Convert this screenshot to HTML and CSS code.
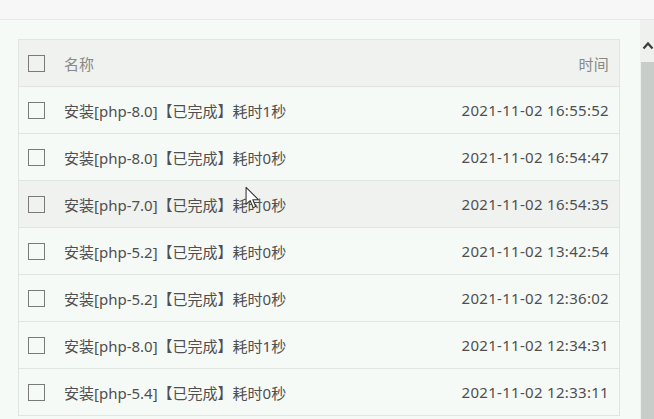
FILE: index.html
```html
<!DOCTYPE html>
<html lang="zh-CN">
<head>
<meta charset="utf-8">
<title>任务列表</title>
<link rel="stylesheet" href="styles.css">
</head>
<body>
<div class="topbar"></div>
<div class="main">
  <div class="content">
    <div class="table">
      <div class="row head">
        <span class="cb"></span>
        <span class="name">名称</span>
        <span class="time">时间</span>
      </div>
      <div class="row"><span class="cb"></span><span class="name">安装[php-8.0]【已完成】耗时1秒</span><span class="time">2021-11-02 16:55:52</span></div>
      <div class="row"><span class="cb"></span><span class="name">安装[php-8.0]【已完成】耗时0秒</span><span class="time">2021-11-02 16:54:47</span></div>
      <div class="row hover"><span class="cb"></span><span class="name">安装[php-7.0]【已完成】耗时0秒</span><span class="time">2021-11-02 16:54:35</span></div>
      <div class="row"><span class="cb"></span><span class="name">安装[php-5.2]【已完成】耗时0秒</span><span class="time">2021-11-02 13:42:54</span></div>
      <div class="row"><span class="cb"></span><span class="name">安装[php-5.2]【已完成】耗时0秒</span><span class="time">2021-11-02 12:36:02</span></div>
      <div class="row"><span class="cb"></span><span class="name">安装[php-8.0]【已完成】耗时1秒</span><span class="time">2021-11-02 12:34:31</span></div>
      <div class="row"><span class="cb"></span><span class="name">安装[php-5.4]【已完成】耗时0秒</span><span class="time">2021-11-02 12:33:11</span></div>
    </div>
  </div>
  <div class="scrollbar">
    <div class="sb-arrow">
      <svg width="12" height="9" viewBox="0 0 12 9"><path d="M1.5 7.5 L6 2.5 L10.5 7.5" fill="none" stroke="#3c3c3c" stroke-width="2.2"/></svg>
    </div>
    <div class="sb-thumb"></div>
  </div>
</div>
<svg class="cursor" width="15" height="24" viewBox="0 0 14 22"><path d="M1 1 L1 17 L4.8 13.4 L7.6 20 L10 19 L7.3 12.6 L12.5 12.6 Z" fill="#fff" stroke="#333" stroke-width="1" stroke-linejoin="round"/></svg>
</body>
</html>
```
FILE: styles.css
```css
html, body {
  margin: 0;
  padding: 0;
}
body {
  width: 654px;
  height: 419px;
  overflow: hidden;
  background: #f6faf7;
  font-family: "Noto Sans", "Noto Sans CJK SC", sans-serif;
  font-size: 15px;
  position: relative;
}
.topbar {
  height: 19px;
  background: #f7f7f7;
  border-bottom: 1px solid #e6e9e6;
}
.main {
  display: flex;
  height: 399px;
}
.content {
  flex: 1;
  padding: 19px 20px 0 18px;
  overflow: hidden;
}
.table {
  border: 1px solid #e1e5e1;
  border-bottom: none;
  background: #f6faf7;
}
.row {
  display: flex;
  align-items: center;
  height: 46px;
  border-bottom: 1px solid #e1e5e1;
  padding: 0 10px 0 9px;
  color: #4f4f4f;
}
.row.head {
  background: #eff2ef;
  color: #888;
}
.row.hover {
  background: #f0f2f0;
}
.cb {
  width: 17px;
  height: 17px;
  border: 1.5px solid #7a7a7a;
  box-sizing: border-box;
  flex: none;
  margin-right: 19px;
}
.name {
  flex: 1;
}
.time {
  text-align: right;
  letter-spacing: 0.3px;
}
.scrollbar {
  width: 14px;
  display: flex;
  flex-direction: column;
  background: #eef1ee;
}
.sb-arrow {
  height: 42px;
  display: flex;
  justify-content: center;
  align-items: flex-start;
  padding-top: 21px;
  box-sizing: border-box;
  padding-left: 2px;
}
.sb-thumb {
  flex: 1;
  background: #c9cdc9;
  margin-left: 1px;
}
.cursor {
  position: absolute;
  left: 245px;
  top: 186px;
}
```
